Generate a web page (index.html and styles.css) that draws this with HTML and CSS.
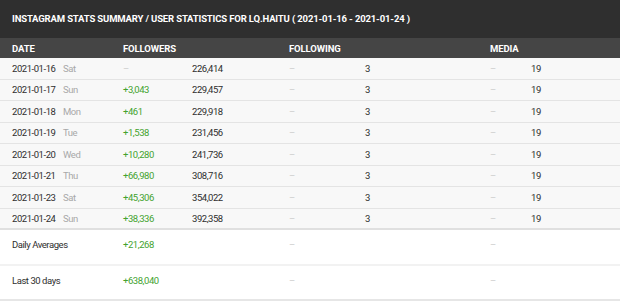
FILE: index.html
```html
<!DOCTYPE html>
<html>
<head>
<meta charset="utf-8">
<link rel="stylesheet" href="styles.css">
</head>
<body>
<div class="stats">
  <div class="title">INSTAGRAM STATS SUMMARY / USER STATISTICS FOR LQ.HAITU ( 2021-01-16 - 2021-01-24 )</div>
  <div class="row head">
    <div class="c-date">DATE</div>
    <div class="c-fch">FOLLOWERS</div>
    <div class="c-ging">FOLLOWING</div>
    <div class="c-media">MEDIA</div>
  </div>
  <div class="row data">
    <div>2021-01-16</div><div class="day">Sat</div><div class="dash">–</div><div>226,414</div><div class="dash">–</div><div>3</div><div class="dash">–</div><div>19</div>
  </div>
  <div class="row data">
    <div>2021-01-17</div><div class="day">Sun</div><div class="pos">+3,043</div><div>229,457</div><div class="dash">–</div><div>3</div><div class="dash">–</div><div>19</div>
  </div>
  <div class="row data">
    <div>2021-01-18</div><div class="day">Mon</div><div class="pos">+461</div><div>229,918</div><div class="dash">–</div><div>3</div><div class="dash">–</div><div>19</div>
  </div>
  <div class="row data">
    <div>2021-01-19</div><div class="day">Tue</div><div class="pos">+1,538</div><div>231,456</div><div class="dash">–</div><div>3</div><div class="dash">–</div><div>19</div>
  </div>
  <div class="row data">
    <div>2021-01-20</div><div class="day">Wed</div><div class="pos">+10,280</div><div>241,736</div><div class="dash">–</div><div>3</div><div class="dash">–</div><div>19</div>
  </div>
  <div class="row data">
    <div>2021-01-21</div><div class="day">Thu</div><div class="pos">+66,980</div><div>308,716</div><div class="dash">–</div><div>3</div><div class="dash">–</div><div>19</div>
  </div>
  <div class="row data">
    <div>2021-01-23</div><div class="day">Sat</div><div class="pos">+45,306</div><div>354,022</div><div class="dash">–</div><div>3</div><div class="dash">–</div><div>19</div>
  </div>
  <div class="row data last">
    <div>2021-01-24</div><div class="day">Sun</div><div class="pos">+38,336</div><div>392,358</div><div class="dash">–</div><div>3</div><div class="dash">–</div><div>19</div>
  </div>
  <div class="row foot">
    <div class="c-date">Daily Averages</div><div class="pos c-fch">+21,268</div><div class="dash c-ging">–</div><div class="dash c-media">–</div>
  </div>
  <div class="row foot">
    <div class="c-date">Last 30 days</div><div class="pos c-fch">+638,040</div><div class="dash c-ging">–</div><div class="dash c-media">–</div>
  </div>
</div>
</body>
</html>
```
FILE: styles.css
```css
html, body {
  margin: 0;
  padding: 0;
  background: #ffffff;
}
body {
  font-family: Roboto, "Liberation Sans", sans-serif;
  font-size: 9.5px;
  letter-spacing: -0.45px;
  color: #2e2e2e;
}
.stats {
  width: 620px;
}
.title {
  background: #2f2f2f;
  color: #ffffff;
  font-weight: bold;
  font-size: 9.5px;
  letter-spacing: -0.15px;
  height: 38px;
  line-height: 38px;
  padding-left: 12px;
  white-space: nowrap;
}
.row {
  display: grid;
  grid-template-columns: 51px 60px 69px 97px 76px 125px 41px 1fr;
  padding-left: 12px;
  align-items: center;
  white-space: nowrap;
  box-sizing: border-box;
}
.head {
  background: #454545;
  color: #ffffff;
  font-weight: bold;
  height: 20px;
  font-size: 9.5px;
  letter-spacing: -0.1px;
}
.c-date { grid-column: 1 / 3; }
.c-fch { grid-column: 3 / 5; }
.c-ging { grid-column: 5 / 7; }
.c-media { grid-column: 7 / 9; }
.foot .c-fch { grid-column: 3 / 4; }
.foot .c-ging { grid-column: 5 / 6; }
.foot .c-media { grid-column: 7 / 8; }
.data {
  background: #f8f8f8;
  height: 21.5px;
  border-bottom: 1px solid #e4e4e4;
}
.data.last {
  border-bottom: 2px solid #e0e0e0;
}
.foot {
  background: #ffffff;
  height: 35.5px;
  padding-bottom: 4px;
  border-bottom: 2px solid #f2f2f2;
}
.foot:last-child {
  border-bottom: 2px solid #e6e6e6;
}
.day {
  color: #a8a8a8;
}
.pos {
  color: #43a32f;
}
.dash {
  color: #cccccc;
}
```
